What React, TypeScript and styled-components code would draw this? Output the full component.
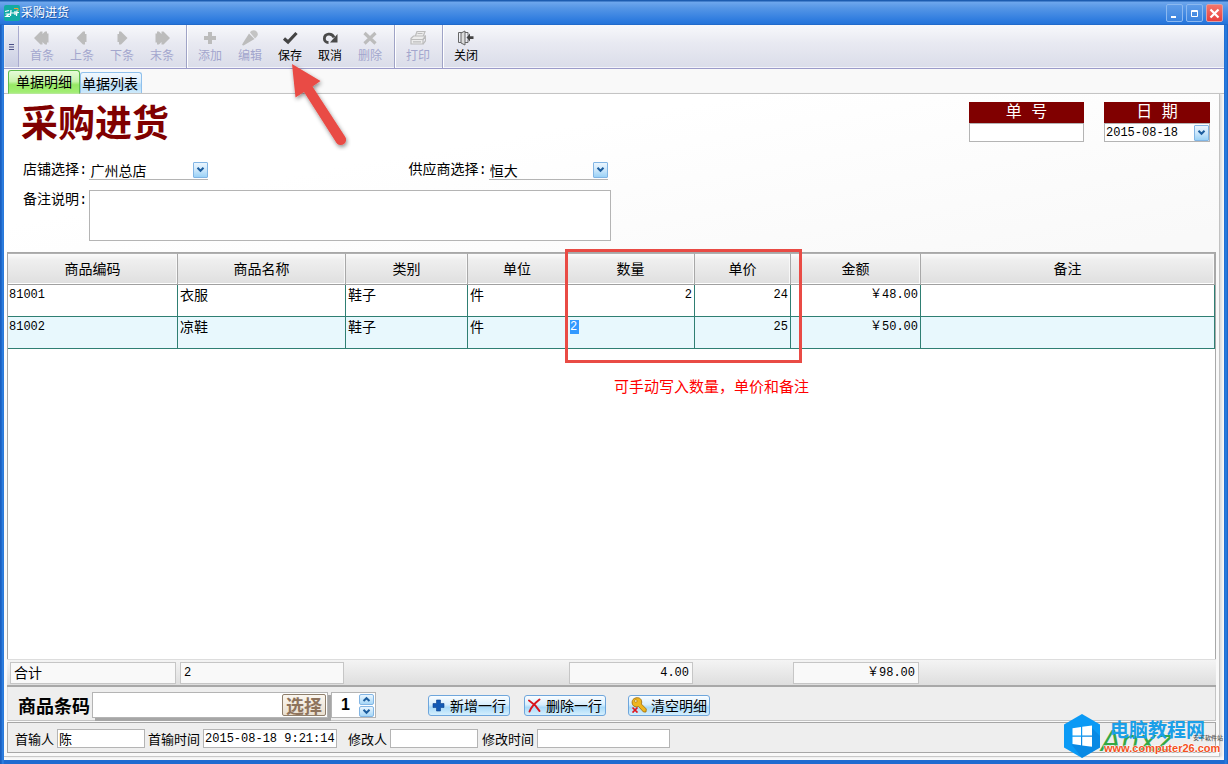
import React, { useState } from 'react';
import type { ReactNode } from 'react';
import styled, { createGlobalStyle, css } from 'styled-components';

const ui = `'Noto Sans CJK SC', sans-serif`;
const mono = `'Liberation Mono', 'Noto Sans CJK SC', monospace`;
const columnWidths = [170, 168, 122, 99, 128, 96, 130];
const maroon = '#800000';
const annotation = '#e94b45';

const GlobalStyle = createGlobalStyle`
  * { box-sizing: border-box; }
  body { margin: 0; font-family: ${ui}; font-size: 14px; font-weight: 400; color: #000; }
  button, input, select, textarea { font: inherit; color: inherit; margin: 0; padding: 0; border-radius: 0; outline: none; }
`;

const Window = styled.div`
  position: relative;
  display: flex;
  flex-direction: column;
  min-height: 100vh;
  padding: 0 4px 4px;
  background: linear-gradient(90deg, #1a5fc0 0, #1a5fc0 1px, #3287e8 3px, #1f6bd0 4px, #1f6bd0 calc(100% - 4px), #2a7fe2 calc(100% - 2px), #1a5fc0 100%);
`;

const TitleBar = styled.header`
  display: flex;
  align-items: center;
  height: 25px;
  margin: 0 -4px;
  padding: 1px 5px 0 4px;
  background: linear-gradient(#1c5cb0 0, #1c5cb0 1px, #6ea7ed 2px, #5596e6 8px, #2f7cdf 20px, #2574d9 24px, #1d60bd 25px);
`;

const Caption = styled.h1`
  flex: 1;
  margin: 0 0 2px 1px;
  font-size: 12px;
  line-height: 16px;
  font-weight: 400;
  color: #fff;
  text-shadow: 1px 1px 1px #1a4f9c;
`;

const CaptionButtons = styled.div`
  display: flex;
  gap: 3px;
`;

const CaptionButton = styled.button<{ $close?: boolean }>`
  display: grid;
  place-items: center;
  width: 17px;
  height: 18px;
  border: 1px solid ${p => (p.$close ? '#d9a0a8' : '#8cb9f0')};
  border-radius: 2px;
  background: ${p => (p.$close ? 'linear-gradient(#f5766b, #e8403f)' : 'linear-gradient(#5e9ce8, #3b84df)')};
`;

const Content = styled.main`
  flex: 1;
  display: flex;
  flex-direction: column;
  background: #f9f9f9;
  padding-bottom: 3px;
`;

const Toolbar = styled.div`
  display: flex;
  height: 44px;
  border-bottom: 1px solid #9b9bc9;
  background: linear-gradient(#f7f8fb, #e9eaf2 40%, #dadde9);
  box-shadow: inset 0 -1px 0 #f4f4fb;
`;

const Grip = styled.div`
  display: grid;
  place-items: center;
  width: 14px;
  margin: 1px 0 1px 1px;
  border-right: 1px solid #a9abd0;
  background: linear-gradient(#eef0f6, #c9cde2);
`;

const ToolGroup = styled.div<{ $last?: boolean }>`
  display: flex;
  padding: 0 4px 0 3px;
  ${p => !p.$last && css`
    border-right: 1px solid #9fa3c6;
    box-shadow: 1px 0 0 #fff;
  `}
`;

const ToolButton = styled.button`
  position: relative;
  display: flex;
  flex-direction: column;
  align-items: center;
  width: 40px;
  padding-top: 5px;
  border: 0;
  background: none;
  color: #000;
  font-size: 12px;
  line-height: 18px;
  &:disabled { color: #a3a6cd; }
`;

const Tabs = styled.div`
  display: flex;
  align-items: flex-end;
  height: 25px;
  padding-left: 4px;
  border-bottom: 1px solid #b9b9b9;
`;

const Tab = styled.button<{ $active?: boolean }>`
  border: 1px solid ${p => (p.$active ? '#5fbb4c' : '#8fc0ec')};
  border-bottom: 0;
  border-radius: 3px 3px 0 0;
  font-size: 14px;
  line-height: 20px;
  white-space: nowrap;
  ${p => p.$active ? css`
    width: 72px;
    height: 24px;
    margin-bottom: -1px;
    padding-bottom: 4px;
    background: linear-gradient(#e6fbd9, #c9f4ae 45%, #96e963 60%, #a5ef78);
  ` : css`
    width: 62px;
    height: 21px;
    padding-right: 2px;
    background: linear-gradient(#f1f8fe, #dceefc 45%, #b5dcf8 60%, #cdeafb);
  `}
`;

const Page = styled.section`
  flex: 1;
  display: flex;
  flex-direction: column;
  margin-right: 4px;
  padding: 0 3px;
  border-right: 1px solid #c2c2c2;
  border-bottom: 1px solid #c8c8c8;
  background: linear-gradient(170deg, #fff 0, #fff 15%, #f9f9f9 40%);
  box-shadow: 2px 0 2px #ddd;
`;

const DocHeader = styled.div`
  display: flex;
  justify-content: space-between;
  align-items: flex-start;
  min-height: 158px;
  padding: 8px 6px 0 16px;
`;

const DocTitle = styled.h2`
  margin: 0 0 20px -2px;
  font-size: 37px;
  line-height: 38px;
  font-weight: 700;
  color: ${maroon};
`;

const FormRow = styled.div`
  display: flex;
  height: 21px;
  margin-bottom: 9px;
`;

const FieldLabel = styled.label`
  font-family: ${mono};
  line-height: 21px;
  white-space: nowrap;
  margin-right: 2px;
`;

const SupplierField = styled.div`
  display: flex;
  margin-left: 200px;
`;

const SelectBox = styled.div<{ $boxed?: boolean }>`
  position: relative;
  width: ${p => (p.$boxed ? 'auto' : '119px')};
  height: ${p => (p.$boxed ? '19px' : '20px')};
  border: ${p => (p.$boxed ? '1px solid #b4b4b4' : '0')};
  border-bottom: 1px solid #b4b4b4;
`;

const Select = styled.select<{ $mono?: boolean }>`
  display: block;
  width: 100%;
  height: 100%;
  padding-left: 1px;
  border: 0;
  appearance: none;
  background: transparent;
  font-family: ${p => (p.$mono ? mono : ui)};
  font-size: ${p => (p.$mono ? '12px' : '14px')};
`;

const SelectArrow = styled.span`
  position: absolute;
  right: 0;
  top: 50%;
  display: grid;
  place-items: center;
  width: 15px;
  height: 16px;
  transform: translateY(-50%);
  border: 1px solid #82b5e4;
  border-radius: 1px;
  background: linear-gradient(#eaf6ff, #cce7fb 50%, #9ad2f7);
  pointer-events: none;
`;

const RemarkRow = styled.div`
  display: flex;
  align-items: flex-start;
`;

const Remark = styled.textarea`
  display: block;
  width: 522px;
  height: 51px;
  border: 1px solid #b4b4b4;
  background: #fff;
  resize: none;
`;

const DocFields = styled.div`
  display: flex;
  gap: 20px;
`;

const DocField = styled.div<{ $w: number }>`
  width: ${p => p.$w}px;
  background: #fff;
`;

const DocFieldLabel = styled.label`
  display: block;
  height: 21px;
  font-family: ${mono};
  font-size: 16px;
  line-height: 22px;
  font-weight: 400;
  text-align: center;
  background: ${maroon};
  color: #fff;
`;

const NumberInput = styled.input`
  display: block;
  width: 100%;
  height: 19px;
  border: 1px solid #b4b4b4;
  background: #fff;
`;

const GridArea = styled.div`
  position: relative;
  flex: 1;
  border: 1px solid #a8a8a8;
  border-width: 1px 1px 0;
  background: #fff;
`;

const DataTable = styled.table`
  width: 100%;
  table-layout: fixed;
  border-collapse: separate;
  border-spacing: 0;
`;

const HeadCell = styled.th`
  height: 32px;
  padding: 0 0 2px;
  border-top: 1px solid #b0b0b0;
  border-right: 1px solid #a8a8a8;
  border-bottom: 1px solid #a0a0a0;
  background: linear-gradient(#fbfbfb, #efefef 20%, #dfdfdf);
  box-shadow: inset 0 -1px 0 #fff, inset -1px 0 0 #f8f8f8;
  font-weight: 400;
  line-height: 20px;
`;

const Row = styled.tr<{ $selected?: boolean }>`
  background: ${p => (p.$selected ? '#e8f8fd' : '#fff')};
`;

const Cell = styled.td<{ $right?: boolean; $mono?: boolean }>`
  height: 32px;
  padding: 0 2px 0 ${p => (p.$mono ? '1px' : '2px')};
  border-right: 1px solid #2f7f73;
  border-bottom: 1px solid #2f7f73;
  vertical-align: top;
  text-align: ${p => (p.$right ? 'right' : 'left')};
  font-family: ${p => (p.$mono ? mono : ui)};
  font-size: ${p => (p.$mono ? '12px' : '14px')};
  line-height: ${p => (p.$mono ? '20px' : '18px')};
`;

const CellEditor = styled.input`
  display: block;
  width: 9px;
  height: 14px;
  margin: 3px 0 0 2px;
  border: 0;
  background: #3399ff;
  color: #fff;
`;

const Highlight = styled.div`
  position: absolute;
  top: -4px;
  left: 557px;
  width: 237px;
  height: 114px;
  border: 3px solid ${annotation};
  pointer-events: none;
`;

const Note = styled.p`
  position: absolute;
  top: 122px;
  left: 606px;
  margin: 0;
  font-size: 15px;
  line-height: 22px;
  color: #f00;
`;

const Arrow = styled.svg`
  position: absolute;
  left: 17px;
  top: 36px;
  z-index: 2;
  pointer-events: none;
`;

const Totals = styled.div`
  display: grid;
  grid-template-columns: ${columnWidths.map(w => `${w}px`).join(' ')} 1fr;
  height: 28px;
  padding: 2px 0 3px 1px;
  border-top: 1px solid #ddd;
  border-bottom: 2px solid #a8a8a8;
  background: linear-gradient(#f4f4f4, #dedede);
`;

const Total = styled.output<{ $right?: boolean; $mono?: boolean; $col: number }>`
  grid-column: ${p => p.$col};
  margin: 0 2px;
  padding: 0 3px;
  border: 1px solid #c6c6c6;
  background: #f9f9f9;
  text-align: ${p => (p.$right ? 'right' : 'left')};
  font-family: ${p => (p.$mono ? mono : ui)};
  font-size: ${p => (p.$mono ? '12px' : '14px')};
  line-height: ${p => (p.$mono ? '20px' : '18px')};
`;

const EntryBar = styled.div`
  display: flex;
  align-items: center;
  height: 34px;
  padding: 3px 0 0 10px;
  border: 1px solid #c4c4c4;
  border-top: 0;
  border-left-color: #ddd;
  background: #eee;
`;

const BarcodeLabel = styled.label`
  width: 74px;
  font-size: 18px;
  line-height: 26px;
  font-weight: 700;
  white-space: nowrap;
`;

const BarcodeBox = styled.div`
  display: flex;
  align-items: center;
  width: 236px;
  height: 26px;
  padding-right: 1px;
  border: 1px solid #b4b4b4;
  background: #fff;
  box-shadow: 3px 3px 0 #a6a6a6;
`;

const BarcodeInput = styled.input`
  flex: 1;
  min-width: 0;
  height: 100%;
  border: 0;
  background: none;
`;

const PickButton = styled.button`
  width: 44px;
  height: 22px;
  border: 1px solid #8f7f6c;
  border-radius: 2px;
  background: linear-gradient(#fbf7f0, #e9dfd0);
  color: #8e735c;
  font-size: 18px;
  line-height: 18px;
  font-weight: 700;
`;

const Spinner = styled.div`
  display: flex;
  align-items: center;
  width: 45px;
  height: 26px;
  margin-left: 3px;
  padding-right: 1px;
  border: 1px solid #b4b4b4;
  background: #fff;
`;

const SpinnerInput = styled.input`
  flex: 1;
  min-width: 0;
  border: 0;
  background: none;
  font-family: 'Liberation Sans', sans-serif;
  font-size: 16px;
  font-weight: 700;
  text-align: center;
`;

const SpinnerButtons = styled.div`
  display: flex;
  flex-direction: column;
  gap: 1px;
`;

const SpinButton = styled.button`
  display: grid;
  place-items: center;
  width: 15px;
  height: 11px;
  border: 1px solid #82b5e4;
  border-radius: 2px;
  background: linear-gradient(#eaf6ff, #a6d7f8);
`;

const Actions = styled.div`
  display: flex;
  gap: 14px;
  margin-left: 52px;
`;

const ActionButton = styled.button<{ $apart?: boolean }>`
  display: flex;
  align-items: center;
  gap: 4px;
  width: 82px;
  height: 21px;
  margin-left: ${p => (p.$apart ? '8px' : '0')};
  padding-left: 2px;
  border: 1px solid #6ea6dc;
  border-radius: 3px;
  background: linear-gradient(#fafdff, #d8eefd 45%, #a9daf9 60%, #d5effd);
  line-height: 19px;
  white-space: nowrap;
`;

const StatusBar = styled.div`
  display: flex;
  align-items: center;
  height: 31px;
  margin: 1px 0 3px;
  padding: 2px 0 0 7px;
  border: 1px solid #a6a6a6;
  background: #eee;
`;

const StatusLabel = styled.label`
  font-size: 13px;
  line-height: 18px;
  white-space: nowrap;
  margin-right: 3px;
`;

const StatusInput = styled.input<{ $w: number; $gap: number; $mono?: boolean }>`
  width: ${p => p.$w}px;
  height: 19px;
  margin-right: ${p => p.$gap}px;
  padding-left: 1px;
  border: 1px solid #b4b4b4;
  background: #fff;
  font-family: ${p => (p.$mono ? mono : ui)};
  font-size: ${p => (p.$mono ? '12px' : '13px')};
`;

const Watermark = styled.div`
  position: absolute;
  right: 0;
  bottom: 4px;
  display: flex;
  align-items: center;
  width: 165px;
  height: 48px;
  pointer-events: none;
`;

const MarkText = styled.div`
  position: relative;
  flex: 1;
  height: 48px;
`;

const MarkName = styled.strong`
  position: absolute;
  top: 5px;
  left: 9px;
  font-size: 19px;
  line-height: 24px;
  font-weight: 700;
  color: #1a9fe8;
  white-space: nowrap;
`;

const MarkUrl = styled.span`
  position: absolute;
  top: 29px;
  left: 3px;
  font-family: 'Liberation Sans', sans-serif;
  font-size: 11px;
  line-height: 14px;
  font-weight: 700;
  color: #f4511e;
  -webkit-text-stroke: 1px #fff;
  paint-order: stroke fill;
`;

const MarkGreen = styled.em`
  position: absolute;
  top: 12px;
  left: 0;
  font-family: 'DejaVu Sans', sans-serif;
  font-size: 29px;
  line-height: 34px;
  font-weight: 400;
  color: #35a845;
`;

const MarkSmall = styled.span`
  position: absolute;
  top: 21px;
  right: 5px;
  font-size: 6px;
  line-height: 10px;
  font-weight: 500;
  color: #555;
`;

const Chevron = ({ up }: { up?: boolean }) => (
  <svg width="9" height="7" viewBox="0 0 9 7" fill="none" stroke="#1c5d9e" strokeWidth="2">
    <path d={up ? 'M1.5 5 4.5 2.2 7.5 5' : 'M1.5 1.8 4.5 4.8 7.5 1.8'} />
  </svg>
);

const glyphs: Record<string, ReactNode> = {
  first: <path fill="#bcbcbc" d="M0 8 6.500 1.500h2V4L11 1.500h2v2h1.500v9H13v2h-2L8.500 12v2.500h-2z" />,
  prev: <path fill="#bcbcbc" d="M2.500 8 9 1.500h2v2.500h1.500v8H11v2.500H9z" />,
  next: <path fill="#bcbcbc" d="M13.500 8 7 1.500H5v2.500H3.500v8H5v2.500h2z" />,
  last: <path fill="#bcbcbc" d="M16 8 9.500 1.500h-2V4L5 1.500H3v2H1.500v9H3v2h2L7.500 12v2.500h2z" />,
  add: <path fill="#bcbcbc" d="M6 2h4v4h4v4h-4v4H6v-4H2V6h4z" />,
  edit: (
    <>
      <path fill="#bcbcbc" d="M7 3.500 12.500 9 1.500 15.500 0 15l1-2z" />
      <path fill="#c4c4c4" d="M8 2.500C9 .5 12-.5 14 1s2.500 4 .5 6l-1.500 1.500z" />
    </>
  ),
  save: <path fill="none" stroke="#444" strokeWidth="3.200" d="M2 8.500 6 12 14.500 3" />,
  undo: (
    <>
      <path fill="none" stroke="#4a4a4a" strokeWidth="2.800" d="M6.500 12.500C1 12.500 1 5 6.500 4.200c3-.4 4.500 1 5.500 3.300" />
      <path fill="#4a4a4a" d="M15.500 4v8.500H8z" />
    </>
  ),
  remove: <path fill="none" stroke="#bcbcbc" strokeWidth="3.200" d="M2.500 3 13.500 13.500M13.500 3 2.500 13.500" />,
  print: (
    <g fill="#ececec" stroke="#bcbcbc" strokeWidth="1.200">
      <path d="M5 7 7 1.500h8L13 7z" />
      <path d="M1 8.500 3.500 6h12L13 9.500V14H1z" />
      <path fill="none" d="M1 9.500h12l2.500-3V11L13 14M3 11.800h8M7.500 3.500h5" />
    </g>
  ),
  close: (
    <g fill="none" stroke="#666" strokeWidth="1">
      <path d="M7 2.500H.5v10H3M7 2.500h3v3M10 9.500v3H7" />
      <path fill="#ddd" d="M3 3 7 1v14l-4-2z" />
      <path fill="#444" stroke="none" d="M8.500 7.500 12 3.500v2.700h3.500v2.800H12v2.500z" />
    </g>
  ),
};

const Glyph = ({ name }: { name: string }) => (
  <svg width="16" height="16" viewBox="0 0 16 16">{glyphs[name]}</svg>
);

const toolGroups = [
  [
    { icon: 'first', label: '首条', off: true },
    { icon: 'prev', label: '上条', off: true },
    { icon: 'next', label: '下条', off: true },
    { icon: 'last', label: '末条', off: true },
  ],
  [
    { icon: 'add', label: '添加', off: true },
    { icon: 'edit', label: '编辑', off: true },
    { icon: 'save', label: '保存', off: false },
    { icon: 'undo', label: '取消', off: false },
    { icon: 'remove', label: '删除', off: true },
  ],
  [{ icon: 'print', label: '打印', off: true }],
  [{ icon: 'close', label: '关闭', off: false }],
];

const headings = ['商品编码', '商品名称', '类别', '单位', '数量', '单价', '金额', '备注'];
const items = [
  { code: '81001', name: '衣服', kind: '鞋子', unit: '件', qty: '2', price: '24', sum: '￥48.00' },
  { code: '81002', name: '凉鞋', kind: '鞋子', unit: '件', qty: '2', price: '25', sum: '￥50.00' },
];

const SaveArrow = () => (
  <Arrow width="64" height="90" viewBox="0 0 64 90">
    <defs>
      <filter id="arrow-shadow" x="-20%" y="-20%" width="150%" height="150%">
        <feDropShadow dx="1" dy="2" stdDeviation="2" floodColor="#000" floodOpacity="0.45" />
      </filter>
    </defs>
    <path
      filter="url(#arrow-shadow)"
      fill={annotation}
      d="M5 3 33.500 20 25.500 25.500 58 75.500A5 5 0 0 1 49.500 82L17 31 8.500 36.500Z"
    />
  </Arrow>
);

export default function App() {
  const [count, setCount] = useState(1);
  return (
    <>
      <GlobalStyle />
      <Window>
        <TitleBar>
          <svg width="16" height="16" viewBox="0 0 16 16">
            <rect width="16" height="16" rx="2" fill="#12aaa4" />
            <path d="M10 3.500h4V6" fill="none" stroke="#f0a030" />
            <path d="M1 6.500l4-1M1.500 9h4L2 11.500h4M7 5l-.5 6M7 8h3M11 6v4M13 5.500 12.500 11M10 8l5-.5" fill="none" stroke="#fff" strokeWidth="1.200" />
          </svg>
          <Caption>采购进货</Caption>
          <CaptionButtons>
            <CaptionButton aria-label="最小化">
              <svg width="11" height="11"><path fill="#fff" d="M2 8h5v2H2z" /></svg>
            </CaptionButton>
            <CaptionButton aria-label="最大化">
              <svg width="11" height="11"><path fill="none" stroke="#fff" d="M2.500 2.500h6v6h-6zM2 3.500h7" /></svg>
            </CaptionButton>
            <CaptionButton $close aria-label="关闭窗口">
              <svg width="11" height="11"><path stroke="#fff" strokeWidth="2.200" d="M1.500 1.500l8 8M9.500 1.500l-8 8" /></svg>
            </CaptionButton>
          </CaptionButtons>
        </TitleBar>

        <Content>
          <Toolbar role="toolbar">
            <Grip>
              <svg width="5" height="6"><path stroke="#4a4f86" d="M0 .5h5M0 3h5M0 5.500h5" /></svg>
            </Grip>
            {toolGroups.map((group, i) => (
              <ToolGroup key={i} $last={i === toolGroups.length - 1}>
                {group.map(tool => (
                  <ToolButton key={tool.label} disabled={tool.off}>
                    <Glyph name={tool.icon} />
                    {tool.label}
                    {tool.icon === 'save' && <SaveArrow />}
                  </ToolButton>
                ))}
              </ToolGroup>
            ))}
          </Toolbar>

          <Tabs role="tablist">
            <Tab role="tab" aria-selected $active>单据明细</Tab>
            <Tab role="tab" aria-selected={false}>单据列表</Tab>
          </Tabs>

          <Page>
            <DocHeader>
              <div>
                <DocTitle>采购进货</DocTitle>
                <FormRow>
                  <FieldLabel htmlFor="shop">店铺选择:</FieldLabel>
                  <SelectBox>
                    <Select id="shop"><option>广州总店</option></Select>
                    <SelectArrow><Chevron /></SelectArrow>
                  </SelectBox>
                  <SupplierField>
                    <FieldLabel htmlFor="supplier">供应商选择:</FieldLabel>
                    <SelectBox>
                      <Select id="supplier"><option>恒大</option></Select>
                      <SelectArrow><Chevron /></SelectArrow>
                    </SelectBox>
                  </SupplierField>
                </FormRow>
                <RemarkRow>
                  <FieldLabel htmlFor="remark">备注说明:</FieldLabel>
                  <Remark id="remark" />
                </RemarkRow>
              </div>
              <DocFields>
                <DocField $w={115}>
                  <DocFieldLabel htmlFor="doc-no">单 号</DocFieldLabel>
                  <NumberInput id="doc-no" />
                </DocField>
                <DocField $w={106}>
                  <DocFieldLabel htmlFor="doc-date">日 期</DocFieldLabel>
                  <SelectBox $boxed>
                    <Select id="doc-date" $mono><option>2015-08-18</option></Select>
                    <SelectArrow><Chevron /></SelectArrow>
                  </SelectBox>
                </DocField>
              </DocFields>
            </DocHeader>

            <GridArea>
              <DataTable>
                <colgroup>
                  {columnWidths.map((w, i) => <col key={i} width={w} />)}
                  <col />
                </colgroup>
                <thead>
                  <tr>{headings.map(h => <HeadCell key={h} scope="col">{h}</HeadCell>)}</tr>
                </thead>
                <tbody>
                  {items.map((item, i) => (
                    <Row key={item.code} $selected={i === 1}>
                      <Cell $mono>{item.code}</Cell>
                      <Cell>{item.name}</Cell>
                      <Cell>{item.kind}</Cell>
                      <Cell>{item.unit}</Cell>
                      <Cell $mono $right>
                        {i === 1 ? <CellEditor aria-label="数量" defaultValue={item.qty} /> : item.qty}
                      </Cell>
                      <Cell $mono $right>{item.price}</Cell>
                      <Cell $mono $right>{item.sum}</Cell>
                      <Cell />
                    </Row>
                  ))}
                </tbody>
              </DataTable>
              <Highlight />
              <Note>可手动写入数量，单价和备注</Note>
            </GridArea>

            <Totals>
              <Total $col={1}>合计</Total>
              <Total $col={2} $mono>2</Total>
              <Total $col={5} $mono $right>4.00</Total>
              <Total $col={7} $mono $right>￥98.00</Total>
            </Totals>

            <EntryBar>
              <BarcodeLabel htmlFor="barcode">商品条码</BarcodeLabel>
              <BarcodeBox>
                <BarcodeInput id="barcode" />
                <PickButton>选择</PickButton>
              </BarcodeBox>
              <Spinner>
                <SpinnerInput aria-label="件数" value={count} readOnly />
                <SpinnerButtons>
                  <SpinButton aria-label="增加" onClick={() => setCount(count + 1)}><Chevron up /></SpinButton>
                  <SpinButton aria-label="减少" onClick={() => setCount(Math.max(1, count - 1))}><Chevron /></SpinButton>
                </SpinnerButtons>
              </Spinner>
              <Actions>
                <ActionButton>
                  <svg width="15" height="15" viewBox="0 0 15 15"><path fill="#1259b5" stroke="#0b3f8c" strokeWidth=".6" d="M5.500 2h4v3.500H13v4H9.500V13h-4V9.500H2v-4h3.500z" /></svg>
                  新增一行
                </ActionButton>
                <ActionButton>
                  <svg width="15" height="15" viewBox="0 0 15 15"><path fill="none" stroke="#d8141c" strokeWidth="2" strokeLinecap="round" d="M2 2.500C6 5 10 9 12.500 13M12.500 1.500C8 5 4 9.500 2.500 13.500" /></svg>
                  删除一行
                </ActionButton>
                <ActionButton $apart>
                  <svg width="16" height="16" viewBox="0 0 16 16">
                    <path fill="#efb51e" stroke="#9a6a08" strokeWidth=".8" d="M2 2.500C4 .2 8.500 0 10 2.500c1 1.800.8 3.500.3 4.500l5 5-.3 3h-2.500L7.500 9.500C5 10.500 2.500 9.500 1.500 7.500.8 5.500 1 3.800 2 2.500z" />
                    <circle cx="4.800" cy="4" r="1.300" fill="#fff3c4" stroke="#9a6a08" strokeWidth=".6" />
                    <path stroke="#e0141c" strokeWidth="1.700" d="M1.500 10.500l5 5M6.500 10.500l-5 5" />
                  </svg>
                  清空明细
                </ActionButton>
              </Actions>
            </EntryBar>

            <StatusBar>
              <StatusLabel htmlFor="creator">首输人</StatusLabel>
              <StatusInput id="creator" $w={88} $gap={3} defaultValue="陈" />
              <StatusLabel htmlFor="created">首输时间</StatusLabel>
              <StatusInput id="created" $w={134} $gap={11} $mono defaultValue="2015-08-18 9:21:14" />
              <StatusLabel htmlFor="editor">修改人</StatusLabel>
              <StatusInput id="editor" $w={88} $gap={4} />
              <StatusLabel htmlFor="edited">修改时间</StatusLabel>
              <StatusInput id="edited" $w={133} $gap={0} $mono />
            </StatusBar>
          </Page>
        </Content>

        <Watermark>
          <svg width="38" height="46" viewBox="0 0 38 46">
            <path fill="#0b9af5" d="M19 1 37 11.500v23L19 45 1 34.500v-23z" />
            <path fill="#0878d4" opacity=".5" d="M29 15 37 23v11.500L19 45 9 32z" />
            <path fill="#fff" d="M9.500 15.200 18 14v8.500H9.500zM19.200 13.800 29 12.500v10h-9.800zM9.500 23.700H18v8.500l-8.500-1.200zM19.200 23.700H29v10l-9.800-1.300z" />
          </svg>
          <MarkText>
            <MarkGreen>Anxz</MarkGreen>
            <MarkName>电脑教程网</MarkName>
            <MarkSmall>安下软件站</MarkSmall>
            <MarkUrl>www.computer26.com</MarkUrl>
          </MarkText>
        </Watermark>
      </Window>
    </>
  );
}
